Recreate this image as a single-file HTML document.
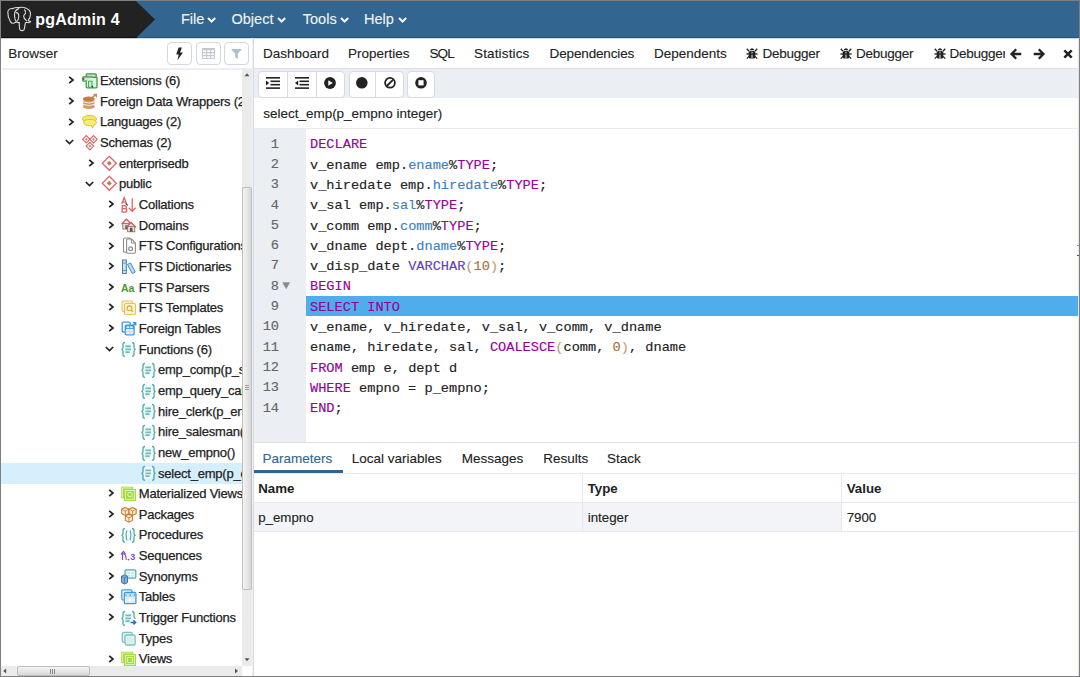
<!DOCTYPE html>
<html><head><meta charset="utf-8"><style>
*{margin:0;padding:0;box-sizing:border-box}
html,body{width:1080px;height:677px;overflow:hidden;background:#fff;font-family:"Liberation Sans",sans-serif;color:#222}
.a{position:absolute}
.tx{white-space:nowrap;font-family:"Liberation Sans",sans-serif;-webkit-text-stroke-width:0.12px}
.mo{white-space:pre;font-family:"Liberation Mono",monospace;-webkit-text-stroke-width:0.15px}
svg{overflow:visible}
.kw{color:#990099}.vr{color:#3c7fc0}.nm{color:#a5733c}.bi{color:#6340c0}.br{color:#bf9f7a}
</style></head><body>
<div class="a" style="left:0px;top:0px;width:1080px;height:677px;background:#7f7f7f;"></div>
<div class="a" style="left:1px;top:1px;width:1078px;height:675px;background:#ffffff;"></div>
<div class="a" style="left:1px;top:1px;width:1078px;height:36px;background:#326690;"></div>
<div class="a" style="left:1px;top:37px;width:1078px;height:1px;background:#24557c;"></div>
<div class="a" style="left:1px;top:1px;width:135px;height:37px;background:#222222;"></div>
<div class="a" style="left:1px;top:37px;width:136px;height:1px;background:#0f0c10;"></div>
<div class="a" style="left:1px;top:38px;width:1078px;height:1px;background:#d3dde8;"></div>
<div class="a" style="left:1px;top:38px;width:137px;height:1px;background:#cfcfcf;"></div>
<svg class="a" style="left:136px;top:1px" width="20" height="37" viewBox="0 0 20 37"><path d="M0 0L19 18.5L0 37Z" fill="#222222"/></svg>
<svg class="a" style="left:0px;top:0px" width="40" height="38" viewBox="0 0 40 38"><g fill="none" stroke="#d6d6d6" stroke-width="1.15" stroke-linecap="round" stroke-linejoin="round">
<path d="M13 8.6C10.2 8.2 8 9.2 7.8 12.2C7.7 15 8.6 18.6 10.4 21.6C11.3 23.1 12.6 23.6 14 23C14.8 22.6 15.3 22.2 15.9 22.3"/>
<path d="M12.6 8.6C14.6 7.6 16.8 7.3 18.6 7.6C20.8 7.1 23.6 7.2 26.2 8.2C28.9 9.3 30.6 11.3 30.5 14.2C30.4 16.8 29.4 18.9 28.2 20.4C29 21.4 30 21.3 30.6 21.6C29.8 22.6 27.6 22.8 26.2 22.3"/>
<path d="M18.8 8.6C16 9.6 14.4 11.6 14.5 15C14.6 18 15.2 20.6 16.4 21.8C17.6 22.8 18.8 22.6 19.2 22.6"/>
<path d="M16.4 12.6C17.7 12.6 18.7 13.8 18.8 16C18.9 18.4 18.6 20 17.2 21"/>
<path d="M19.2 22.6C19.4 25 19.2 27.6 19.8 29.2C20.6 30.9 22.8 31.1 23.9 29.8C24.9 28.4 24.8 25.4 25.2 23.6C25.4 22.8 25.8 22.5 26.3 22.4"/>
<path d="M24.4 9.8C25.6 10.8 26 12.2 25.4 13.4C24.7 14.6 23.6 15 23.7 16.4C23.8 18 24.8 19.6 26.4 20.6"/>
</g></svg>
<div class="a tx" style="left:35.30px;top:11.98px;font-size:16px;line-height:16px;font-weight:bold;color:#ffffff;letter-spacing:0.2px;-webkit-text-stroke-width:0;">pgAdmin 4</div>
<div class="a tx" style="left:181.00px;top:12.41px;font-size:14.5px;line-height:14.5px;font-weight:normal;color:#f2f2f2;letter-spacing:0px;">File</div>
<svg class="a" style="left:207.4px;top:16.6px" width="9" height="6" viewBox="0 0 9 6"><path d="M1 1.1L4.6 4.6L8.2 1.1" fill="none" stroke="#f4f4f4" stroke-width="2.1"/></svg>
<div class="a tx" style="left:231.50px;top:12.41px;font-size:14.5px;line-height:14.5px;font-weight:normal;color:#f2f2f2;letter-spacing:0px;">Object</div>
<svg class="a" style="left:276.9px;top:16.6px" width="9" height="6" viewBox="0 0 9 6"><path d="M1 1.1L4.6 4.6L8.2 1.1" fill="none" stroke="#f4f4f4" stroke-width="2.1"/></svg>
<div class="a tx" style="left:302.80px;top:12.41px;font-size:14.5px;line-height:14.5px;font-weight:normal;color:#f2f2f2;letter-spacing:0px;">Tools</div>
<svg class="a" style="left:340.4px;top:16.6px" width="9" height="6" viewBox="0 0 9 6"><path d="M1 1.1L4.6 4.6L8.2 1.1" fill="none" stroke="#f4f4f4" stroke-width="2.1"/></svg>
<div class="a tx" style="left:364.00px;top:12.41px;font-size:14.5px;line-height:14.5px;font-weight:normal;color:#f2f2f2;letter-spacing:0px;">Help</div>
<svg class="a" style="left:397.9px;top:16.6px" width="9" height="6" viewBox="0 0 9 6"><path d="M1 1.1L4.6 4.6L8.2 1.1" fill="none" stroke="#f4f4f4" stroke-width="2.1"/></svg>
<div class="a tx" style="left:8.20px;top:46.90px;font-size:13.5px;line-height:13.5px;font-weight:normal;color:#222;letter-spacing:0px;">Browser</div>
<div class="a" style="left:167px;top:42px;width:25px;height:23px;border:1px solid #d4d8df;border-radius:4px;background:#fff"></div>
<div class="a" style="left:196px;top:42px;width:25px;height:23px;border:1px solid #d4d8df;border-radius:4px;background:#fff"></div>
<div class="a" style="left:224px;top:42px;width:25px;height:23px;border:1px solid #d4d8df;border-radius:4px;background:#fff"></div>
<svg class="a" style="left:175px;top:47px" width="9" height="14" viewBox="0 0 9 14"><path d="M3.6 0.4H6.9L5 5.5H7.9L2.5 13.3L3.7 7.6H1.2Z" fill="#222"/></svg>
<svg class="a" style="left:202px;top:47.5px" width="13" height="11" viewBox="0 0 13 11"><rect x="0" y="0" width="13" height="11" rx="1" fill="#c3c8d0"/><rect x="1.2" y="2.2" width="2.9" height="1.8" fill="#fff"/><rect x="5.2" y="2.2" width="2.9" height="1.8" fill="#fff"/><rect x="9.2" y="2.2" width="2.9" height="1.8" fill="#fff"/><rect x="1.2" y="5.2" width="2.9" height="1.8" fill="#fff"/><rect x="5.2" y="5.2" width="2.9" height="1.8" fill="#fff"/><rect x="9.2" y="5.2" width="2.9" height="1.8" fill="#fff"/><rect x="1.2" y="8.2" width="2.9" height="1.8" fill="#fff"/><rect x="5.2" y="8.2" width="2.9" height="1.8" fill="#fff"/><rect x="9.2" y="8.2" width="2.9" height="1.8" fill="#fff"/></svg>
<svg class="a" style="left:231px;top:49px" width="11" height="10" viewBox="0 0 11 10"><path d="M0 0H11L6.8 4.8V10L4.2 8.6V4.8Z" fill="#b3bfcb"/></svg>
<div class="a" style="left:2px;top:68px;width:251px;height:2px;background:#eceef3;"></div>
<div class="a" style="left:242px;top:69px;width:10px;height:597px;background:#ebebeb;"></div>
<svg class="a" style="left:242px;top:72px" width="10" height="6" viewBox="0 0 10 6"><path d="M2.5 4.2L5 1.2L7.5 4.2Z" fill="#555"/></svg>
<svg class="a" style="left:242px;top:657px" width="10" height="6" viewBox="0 0 10 6"><path d="M2.5 1.2L5 4.2L7.5 1.2Z" fill="#555"/></svg>
<div class="a" style="left:242px;top:187px;width:10px;height:403px;border:1px solid #bdbdbd;border-radius:2px;background:linear-gradient(90deg,#f4f4f4,#d9d9d9)"></div>
<div class="a" style="left:245px;top:385px;width:4px;height:6px;background:repeating-linear-gradient(180deg,#9a9a9a 0 1px,transparent 1px 2px);"></div>
<div class="a" style="left:252px;top:38px;width:1px;height:638px;background:#f0f1f4;"></div>
<div class="a" style="left:253px;top:38px;width:1px;height:638px;background:#d8dbe2;"></div>
<div class="a" style="left:1px;top:666px;width:241px;height:10px;background:#ebebeb;"></div>
<svg class="a" style="left:1px;top:666px" width="8" height="10" viewBox="0 0 8 10"><path d="M5.2 2.5L2.2 5L5.2 7.5Z" fill="#555"/></svg>
<svg class="a" style="left:232px;top:666px" width="8" height="10" viewBox="0 0 8 10"><path d="M3 2.5L6 5L3 7.5Z" fill="#555"/></svg>
<div class="a" style="left:17px;top:666px;width:73px;height:10px;border:1px solid #bdbdbd;border-radius:2px;background:linear-gradient(180deg,#f4f4f4,#d9d9d9)"></div>
<div class="a" style="left:50px;top:669px;width:6px;height:5px;background:repeating-linear-gradient(90deg,#888 0 1px,transparent 1px 2px);"></div>
<div class="a" style="left:1px;top:69px;width:241px;height:597px;overflow:hidden">
<svg class="a" style="left:67.00px;top:7.30px" width="7" height="8" viewBox="0 0 7 8"><path d="M1.2 0.8L5 4L1.2 7.2" fill="none" stroke="#222" stroke-width="1.7"/></svg>
<svg class="a" style="left:81.00px;top:4.00px;overflow:visible" width="16" height="16" viewBox="0 0 16 16"><path d="M4.2 4.5V1.8Q4.2 0.8 5.2 0.8H13.2Q14.2 0.8 14.2 1.8V4.5" fill="#d6d6d6" stroke="#3f9a3f" stroke-width="1.3"/>
<rect x="0.8" y="3.8" width="9.6" height="4.4" rx="0.8" fill="#dcdcdc" stroke="#3f9a3f" stroke-width="1.3"/>
<path d="M10.4 4.4H14.2Q15 4.4 15 5.2V13.8Q15 14.8 14 14.8H5.2Q4.2 14.8 4.2 13.8V8.2" fill="#d8f6e4" stroke="#3f9a3f" stroke-width="1.3"/>
<rect x="6.6" y="8.2" width="3.4" height="6" fill="#c8f0dc" stroke="#3f9a3f" stroke-width="0.9"/>
<circle cx="1.6" cy="6" r="0.8" fill="#222"/><circle cx="10.4" cy="13.6" r="0.8" fill="#222"/></svg>
<div class="a tx" style="left:99.10px;top:5.15px;font-size:13px;line-height:13px;letter-spacing:-0.22px;color:#222;-webkit-text-stroke-width:0.25px">Extensions (6)</div>
<svg class="a" style="left:67.00px;top:27.95px" width="7" height="8" viewBox="0 0 7 8"><path d="M1.2 0.8L5 4L1.2 7.2" fill="none" stroke="#222" stroke-width="1.7"/></svg>
<svg class="a" style="left:81.00px;top:24.65px;overflow:visible" width="16" height="16" viewBox="0 0 16 16"><g fill="#d09c64"><ellipse cx="6.8" cy="12.6" rx="6" ry="2.3"/><ellipse cx="6.8" cy="10" rx="6" ry="2.3"/><ellipse cx="6.8" cy="7.4" rx="6" ry="2.3"/><ellipse cx="6.8" cy="4.8" rx="6" ry="2.3" fill="#bd8248"/></g>
<g stroke="#fff" stroke-width="0.8" fill="none"><path d="M0.8 7.6Q6.8 10.6 12.8 7.6"/><path d="M0.8 10.2Q6.8 13.2 12.8 10.2"/></g>
<path d="M9.8 3.6L14 0.8M11.4 0.5H14.4V3.4" stroke="#d08a40" stroke-width="1.3" fill="none"/></svg>
<div class="a tx" style="left:99.10px;top:25.80px;font-size:13px;line-height:13px;letter-spacing:-0.22px;color:#222;-webkit-text-stroke-width:0.25px">Foreign Data Wrappers (2)</div>
<svg class="a" style="left:67.00px;top:48.60px" width="7" height="8" viewBox="0 0 7 8"><path d="M1.2 0.8L5 4L1.2 7.2" fill="none" stroke="#222" stroke-width="1.7"/></svg>
<svg class="a" style="left:81.00px;top:45.30px;overflow:visible" width="16" height="16" viewBox="0 0 16 16"><ellipse cx="7.5" cy="5" rx="7" ry="3.6" fill="#f2ea6a" stroke="#d7c43a" stroke-width="1"/>
<ellipse cx="8" cy="8.5" rx="6.5" ry="3.2" fill="#f6ee74" stroke="#d7c43a" stroke-width="1"/>
<path d="M9 11L10.5 14L12 10.5" fill="#f6ee74" stroke="#d7c43a" stroke-width="1"/></svg>
<div class="a tx" style="left:99.10px;top:46.45px;font-size:13px;line-height:13px;letter-spacing:-0.22px;color:#222;-webkit-text-stroke-width:0.25px">Languages (2)</div>
<svg class="a" style="left:64.40px;top:70.45px" width="9" height="6" viewBox="0 0 9 6"><path d="M0.8 1L4.5 4.6L8.2 1" fill="none" stroke="#222" stroke-width="1.7"/></svg>
<svg class="a" style="left:81.00px;top:65.95px;overflow:visible" width="16" height="16" viewBox="0 0 16 16"><g fill="#fff" stroke="#d9666d" stroke-width="1.2"><path d="M4.3 0.6L8 4.3L4.3 8L0.6 4.3Z"/><path d="M11.5 0.6L15.2 4.3L11.5 8L7.8 4.3Z"/><path d="M7.9 7.4L11.6 11.1L7.9 14.8L4.2 11.1Z"/></g>
<g fill="#c87a5a"><rect x="3.3" y="3.3" width="2" height="2" transform="rotate(45 4.3 4.3)"/><rect x="10.5" y="3.3" width="2" height="2" transform="rotate(45 11.5 4.3)"/><rect x="6.9" y="10.1" width="2" height="2" transform="rotate(45 7.9 11.1)"/></g></svg>
<div class="a tx" style="left:99.10px;top:67.10px;font-size:13px;line-height:13px;letter-spacing:-0.22px;color:#222;-webkit-text-stroke-width:0.25px">Schemas (2)</div>
<svg class="a" style="left:87.00px;top:89.90px" width="7" height="8" viewBox="0 0 7 8"><path d="M1.2 0.8L5 4L1.2 7.2" fill="none" stroke="#222" stroke-width="1.7"/></svg>
<svg class="a" style="left:101.00px;top:86.60px;overflow:visible" width="16" height="16" viewBox="0 0 16 16"><path d="M7.3 0.3L14.3 7.3L7.3 14.3L0.3 7.3Z" fill="#fff" stroke="#d9666d" stroke-width="1.3"/>
<rect x="5.5" y="5.5" width="3.6" height="3.6" fill="#c8784e" transform="rotate(45 7.3 7.3)"/></svg>
<div class="a tx" style="left:117.90px;top:87.75px;font-size:13px;line-height:13px;letter-spacing:-0.22px;color:#222;-webkit-text-stroke-width:0.25px">enterprisedb</div>
<svg class="a" style="left:84.40px;top:111.75px" width="9" height="6" viewBox="0 0 9 6"><path d="M0.8 1L4.5 4.6L8.2 1" fill="none" stroke="#222" stroke-width="1.7"/></svg>
<svg class="a" style="left:101.00px;top:107.25px;overflow:visible" width="16" height="16" viewBox="0 0 16 16"><path d="M7.3 0.3L14.3 7.3L7.3 14.3L0.3 7.3Z" fill="#fff" stroke="#d9666d" stroke-width="1.3"/>
<rect x="5.5" y="5.5" width="3.6" height="3.6" fill="#c8784e" transform="rotate(45 7.3 7.3)"/></svg>
<div class="a tx" style="left:117.90px;top:108.40px;font-size:13px;line-height:13px;letter-spacing:-0.22px;color:#222;-webkit-text-stroke-width:0.25px">public</div>
<svg class="a" style="left:106.50px;top:131.20px" width="7" height="8" viewBox="0 0 7 8"><path d="M1.2 0.8L5 4L1.2 7.2" fill="none" stroke="#222" stroke-width="1.7"/></svg>
<svg class="a" style="left:120.00px;top:127.90px;overflow:visible" width="16" height="16" viewBox="0 0 16 16"><g fill="none" stroke="#dd5f66" stroke-width="1.25"><path d="M0.8 7L3.2 0.6L5.6 7M1.6 5H4.8"/><path d="M1.2 8.6H3.6Q5.4 8.6 5.4 10.3Q5.4 11.7 3.6 11.7H1.2ZM1.2 11.7H3.8Q5.8 11.7 5.8 13.4Q5.8 15.1 3.8 15.1H1.2Z"/>
<path d="M11.2 1.2V14.2M7.8 10.8L11.2 14.4L14.6 10.8"/></g><path d="M4.6 6.6L7 8.4" stroke="#333" stroke-width="1.1"/></svg>
<div class="a tx" style="left:137.80px;top:129.05px;font-size:13px;line-height:13px;letter-spacing:-0.22px;color:#222;-webkit-text-stroke-width:0.25px">Collations</div>
<svg class="a" style="left:106.50px;top:151.85px" width="7" height="8" viewBox="0 0 7 8"><path d="M1.2 0.8L5 4L1.2 7.2" fill="none" stroke="#222" stroke-width="1.7"/></svg>
<svg class="a" style="left:120.00px;top:148.55px;overflow:visible" width="16" height="16" viewBox="0 0 16 16"><path d="M0.6 6.3L5.5 1.3L10.4 6.3" fill="none" stroke="#e0575c" stroke-width="1.4"/><rect x="1.8" y="5.6" width="7.4" height="5.4" fill="#cfe6f6" stroke="#8a6a50" stroke-width="0.8"/><rect x="4.3" y="7.2" width="2.6" height="3.8" fill="#8a4a20"/>
<path d="M5.3 9.3L10 4.5L14.9 9.3" fill="#cfe6f6" stroke="#e0575c" stroke-width="1.4"/><rect x="6.6" y="8.4" width="7.2" height="5.4" fill="#cfe6f6" stroke="#8a6a50" stroke-width="0.8"/><rect x="8.9" y="9.8" width="2.6" height="4" fill="#8a4a20"/></svg>
<div class="a tx" style="left:137.80px;top:149.70px;font-size:13px;line-height:13px;letter-spacing:-0.22px;color:#222;-webkit-text-stroke-width:0.25px">Domains</div>
<svg class="a" style="left:106.50px;top:172.50px" width="7" height="8" viewBox="0 0 7 8"><path d="M1.2 0.8L5 4L1.2 7.2" fill="none" stroke="#222" stroke-width="1.7"/></svg>
<svg class="a" style="left:120.00px;top:169.20px;overflow:visible" width="16" height="16" viewBox="0 0 16 16"><path d="M2.5 1.5Q2.5 0 4 0H8.5L10.5 2V13Q10.5 14.2 9.3 14.2H3.7Q2.5 14.2 2.5 13Z" fill="#fff" stroke="#8a8a8a" stroke-width="1.1"/>
<path d="M5.6 2.2Q5.6 1 6.8 1H10.5L14.4 4.9V14.1Q14.4 15.3 13.2 15.3H6.8Q5.6 15.3 5.6 14.1Z" fill="#fff" stroke="#8a8a8a" stroke-width="1.1"/><path d="M10.4 1.2V5H14.2" fill="none" stroke="#8a8a8a" stroke-width="1"/>
<circle cx="9.6" cy="10.8" r="1.9" fill="none" stroke="#8a8a8a" stroke-width="1.2"/></svg>
<div class="a tx" style="left:137.80px;top:170.35px;font-size:13px;line-height:13px;letter-spacing:-0.22px;color:#222;-webkit-text-stroke-width:0.25px">FTS Configurations</div>
<svg class="a" style="left:106.50px;top:193.15px" width="7" height="8" viewBox="0 0 7 8"><path d="M1.2 0.8L5 4L1.2 7.2" fill="none" stroke="#222" stroke-width="1.7"/></svg>
<svg class="a" style="left:120.00px;top:189.85px;overflow:visible" width="16" height="16" viewBox="0 0 16 16"><rect x="1.5" y="1" width="3.8" height="13.5" fill="#cfe4f2" stroke="#4a7eaa" stroke-width="1"/>
<path d="M6.5 5.5L9.5 4L14.3 13L11.3 14.6Z" fill="#b9dcf3" stroke="#3d8fd0" stroke-width="1"/>
<path d="M1.8 4H5M1.8 11.5H5" stroke="#4a7eaa" stroke-width="0.8"/></svg>
<div class="a tx" style="left:137.80px;top:191.00px;font-size:13px;line-height:13px;letter-spacing:-0.22px;color:#222;-webkit-text-stroke-width:0.25px">FTS Dictionaries</div>
<svg class="a" style="left:106.50px;top:213.80px" width="7" height="8" viewBox="0 0 7 8"><path d="M1.2 0.8L5 4L1.2 7.2" fill="none" stroke="#222" stroke-width="1.7"/></svg>
<svg class="a" style="left:120.00px;top:210.50px;overflow:visible" width="16" height="16" viewBox="0 0 16 16"><text x="0" y="12" font-family="Liberation Sans" font-weight="bold" font-size="10.5" fill="#4c9a2a">Aa</text></svg>
<div class="a tx" style="left:137.80px;top:211.65px;font-size:13px;line-height:13px;letter-spacing:-0.22px;color:#222;-webkit-text-stroke-width:0.25px">FTS Parsers</div>
<svg class="a" style="left:106.50px;top:234.45px" width="7" height="8" viewBox="0 0 7 8"><path d="M1.2 0.8L5 4L1.2 7.2" fill="none" stroke="#222" stroke-width="1.7"/></svg>
<svg class="a" style="left:120.00px;top:231.15px;overflow:visible" width="16" height="16" viewBox="0 0 16 16"><rect x="1" y="1" width="10.5" height="10.5" rx="1.5" fill="#fdf4d0" stroke="#e8c060" stroke-width="1.1"/>
<rect x="3.5" y="3.5" width="11" height="11" rx="1.5" fill="#fdf4d0" stroke="#e8c060" stroke-width="1.1"/>
<circle cx="8.5" cy="8.3" r="2.4" fill="none" stroke="#d9a830" stroke-width="1.1"/><path d="M10.2 10L12 11.8" stroke="#d9a830" stroke-width="1.1"/></svg>
<div class="a tx" style="left:137.80px;top:232.30px;font-size:13px;line-height:13px;letter-spacing:-0.22px;color:#222;-webkit-text-stroke-width:0.25px">FTS Templates</div>
<svg class="a" style="left:106.50px;top:255.10px" width="7" height="8" viewBox="0 0 7 8"><path d="M1.2 0.8L5 4L1.2 7.2" fill="none" stroke="#222" stroke-width="1.7"/></svg>
<svg class="a" style="left:120.00px;top:251.80px;overflow:visible" width="16" height="16" viewBox="0 0 16 16"><rect x="1.2" y="1.2" width="8" height="9.8" rx="1.2" fill="#fff" stroke="#3a96e6" stroke-width="1.3"/>
<rect x="4.3" y="4.1" width="8.8" height="9.7" rx="1.2" fill="#eef0f2" stroke="#3a96e6" stroke-width="1.3"/>
<rect x="4.5" y="4.3" width="8.4" height="3.6" fill="#3a96e6"/><rect x="5.6" y="5.3" width="2.6" height="1.6" fill="#fff"/><rect x="9.2" y="5.3" width="2.6" height="1.6" fill="#fff"/>
<path d="M4.3 10.8H13.1M8.7 7.9V13.8" stroke="#bcd6ee" stroke-width="0.9"/>
<path d="M10.8 5.4L14.4 2M11.8 1.6H14.8V4.4" stroke="#3a96e6" stroke-width="1.2" fill="none"/></svg>
<div class="a tx" style="left:137.80px;top:252.95px;font-size:13px;line-height:13px;letter-spacing:-0.22px;color:#222;-webkit-text-stroke-width:0.25px">Foreign Tables</div>
<svg class="a" style="left:103.90px;top:276.95px" width="9" height="6" viewBox="0 0 9 6"><path d="M0.8 1L4.5 4.6L8.2 1" fill="none" stroke="#222" stroke-width="1.7"/></svg>
<svg class="a" style="left:120.00px;top:272.45px;overflow:visible" width="16" height="16" viewBox="0 0 16 16"><rect x="3" y="2" width="9" height="12" rx="3" fill="#eefafa"/><g fill="none" stroke="#52a6ac" stroke-width="1.3" transform="translate(0 0.5)"><path d="M4 1Q2 1 2 3V6Q2 7.9 0.3 7.9Q2 7.9 2 9.8V12.8Q2 14.8 4 14.8"/><path d="M11 1Q13 1 13 3V6Q13 7.9 14.7 7.9Q13 7.9 13 9.8V12.8Q13 14.8 11 14.8"/></g><path d="M4.4 4.8H10M4.4 7.8H10M4.4 10.7H8.6" stroke="#6dbdb8" stroke-width="1.7" transform="translate(0 0.5)"/></svg>
<div class="a tx" style="left:137.80px;top:273.60px;font-size:13px;line-height:13px;letter-spacing:-0.22px;color:#222;-webkit-text-stroke-width:0.25px">Functions (6)</div>
<svg class="a" style="left:140.00px;top:293.10px;overflow:visible" width="16" height="16" viewBox="0 0 16 16"><rect x="3" y="2" width="9" height="12" rx="3" fill="#eefafa"/><g fill="none" stroke="#52a6ac" stroke-width="1.3" transform="translate(0 0.5)"><path d="M4 1Q2 1 2 3V6Q2 7.9 0.3 7.9Q2 7.9 2 9.8V12.8Q2 14.8 4 14.8"/><path d="M11 1Q13 1 13 3V6Q13 7.9 14.7 7.9Q13 7.9 13 9.8V12.8Q13 14.8 11 14.8"/></g><path d="M4.4 4.8H10M4.4 7.8H10M4.4 10.7H8.6" stroke="#6dbdb8" stroke-width="1.7" transform="translate(0 0.5)"/></svg>
<div class="a tx" style="left:157.00px;top:294.25px;font-size:13px;line-height:13px;letter-spacing:-0.22px;color:#222;-webkit-text-stroke-width:0.25px">emp_comp(p_sal numeric, p_comm numeric)</div>
<svg class="a" style="left:140.00px;top:313.75px;overflow:visible" width="16" height="16" viewBox="0 0 16 16"><rect x="3" y="2" width="9" height="12" rx="3" fill="#eefafa"/><g fill="none" stroke="#52a6ac" stroke-width="1.3" transform="translate(0 0.5)"><path d="M4 1Q2 1 2 3V6Q2 7.9 0.3 7.9Q2 7.9 2 9.8V12.8Q2 14.8 4 14.8"/><path d="M11 1Q13 1 13 3V6Q13 7.9 14.7 7.9Q13 7.9 13 9.8V12.8Q13 14.8 11 14.8"/></g><path d="M4.4 4.8H10M4.4 7.8H10M4.4 10.7H8.6" stroke="#6dbdb8" stroke-width="1.7" transform="translate(0 0.5)"/></svg>
<div class="a tx" style="left:157.00px;top:314.90px;font-size:13px;line-height:13px;letter-spacing:-0.22px;color:#222;-webkit-text-stroke-width:0.25px">emp_query_caller()</div>
<svg class="a" style="left:140.00px;top:334.40px;overflow:visible" width="16" height="16" viewBox="0 0 16 16"><rect x="3" y="2" width="9" height="12" rx="3" fill="#eefafa"/><g fill="none" stroke="#52a6ac" stroke-width="1.3" transform="translate(0 0.5)"><path d="M4 1Q2 1 2 3V6Q2 7.9 0.3 7.9Q2 7.9 2 9.8V12.8Q2 14.8 4 14.8"/><path d="M11 1Q13 1 13 3V6Q13 7.9 14.7 7.9Q13 7.9 13 9.8V12.8Q13 14.8 11 14.8"/></g><path d="M4.4 4.8H10M4.4 7.8H10M4.4 10.7H8.6" stroke="#6dbdb8" stroke-width="1.7" transform="translate(0 0.5)"/></svg>
<div class="a tx" style="left:157.00px;top:335.55px;font-size:13px;line-height:13px;letter-spacing:-0.22px;color:#222;-webkit-text-stroke-width:0.25px">hire_clerk(p_ename character varying)</div>
<svg class="a" style="left:140.00px;top:355.05px;overflow:visible" width="16" height="16" viewBox="0 0 16 16"><rect x="3" y="2" width="9" height="12" rx="3" fill="#eefafa"/><g fill="none" stroke="#52a6ac" stroke-width="1.3" transform="translate(0 0.5)"><path d="M4 1Q2 1 2 3V6Q2 7.9 0.3 7.9Q2 7.9 2 9.8V12.8Q2 14.8 4 14.8"/><path d="M11 1Q13 1 13 3V6Q13 7.9 14.7 7.9Q13 7.9 13 9.8V12.8Q13 14.8 11 14.8"/></g><path d="M4.4 4.8H10M4.4 7.8H10M4.4 10.7H8.6" stroke="#6dbdb8" stroke-width="1.7" transform="translate(0 0.5)"/></svg>
<div class="a tx" style="left:157.00px;top:356.20px;font-size:13px;line-height:13px;letter-spacing:-0.22px;color:#222;-webkit-text-stroke-width:0.25px">hire_salesman(p_ename character varying)</div>
<svg class="a" style="left:140.00px;top:375.70px;overflow:visible" width="16" height="16" viewBox="0 0 16 16"><rect x="3" y="2" width="9" height="12" rx="3" fill="#eefafa"/><g fill="none" stroke="#52a6ac" stroke-width="1.3" transform="translate(0 0.5)"><path d="M4 1Q2 1 2 3V6Q2 7.9 0.3 7.9Q2 7.9 2 9.8V12.8Q2 14.8 4 14.8"/><path d="M11 1Q13 1 13 3V6Q13 7.9 14.7 7.9Q13 7.9 13 9.8V12.8Q13 14.8 11 14.8"/></g><path d="M4.4 4.8H10M4.4 7.8H10M4.4 10.7H8.6" stroke="#6dbdb8" stroke-width="1.7" transform="translate(0 0.5)"/></svg>
<div class="a tx" style="left:157.00px;top:376.85px;font-size:13px;line-height:13px;letter-spacing:-0.22px;color:#222;-webkit-text-stroke-width:0.25px">new_empno()</div>
<div class="a" style="left:0px;top:393.65px;width:241px;height:21px;background:#d6effc"></div>
<svg class="a" style="left:140.00px;top:396.35px;overflow:visible" width="16" height="16" viewBox="0 0 16 16"><rect x="3" y="2" width="9" height="12" rx="3" fill="#eefafa"/><g fill="none" stroke="#52a6ac" stroke-width="1.3" transform="translate(0 0.5)"><path d="M4 1Q2 1 2 3V6Q2 7.9 0.3 7.9Q2 7.9 2 9.8V12.8Q2 14.8 4 14.8"/><path d="M11 1Q13 1 13 3V6Q13 7.9 14.7 7.9Q13 7.9 13 9.8V12.8Q13 14.8 11 14.8"/></g><path d="M4.4 4.8H10M4.4 7.8H10M4.4 10.7H8.6" stroke="#6dbdb8" stroke-width="1.7" transform="translate(0 0.5)"/></svg>
<div class="a tx" style="left:157.00px;top:397.50px;font-size:13px;line-height:13px;letter-spacing:-0.22px;color:#222;-webkit-text-stroke-width:0.25px">select_emp(p_empno integer)</div>
<svg class="a" style="left:106.50px;top:420.30px" width="7" height="8" viewBox="0 0 7 8"><path d="M1.2 0.8L5 4L1.2 7.2" fill="none" stroke="#222" stroke-width="1.7"/></svg>
<svg class="a" style="left:120.00px;top:417.00px;overflow:visible" width="16" height="16" viewBox="0 0 16 16"><rect x="0.2" y="0.7" width="12" height="11.5" fill="#a5dc45"/><rect x="3" y="3" width="12" height="12" fill="#a5dc45"/>
<path d="M1.5 11V2H11" fill="none" stroke="#e8f8c8" stroke-width="0.8"/><rect x="4.5" y="4.5" width="9" height="9" fill="none" stroke="#e8f8c8" stroke-width="0.8"/>
<circle cx="9" cy="8.6" r="2.3" fill="none" stroke="#e8f8c8" stroke-width="0.9"/><path d="M10.6 10.4L12.6 12.4" stroke="#e8f8c8" stroke-width="0.9"/></svg>
<div class="a tx" style="left:137.80px;top:418.15px;font-size:13px;line-height:13px;letter-spacing:-0.22px;color:#222;-webkit-text-stroke-width:0.25px">Materialized Views</div>
<svg class="a" style="left:106.50px;top:440.95px" width="7" height="8" viewBox="0 0 7 8"><path d="M1.2 0.8L5 4L1.2 7.2" fill="none" stroke="#222" stroke-width="1.7"/></svg>
<svg class="a" style="left:120.00px;top:437.65px;overflow:visible" width="16" height="16" viewBox="0 0 16 16"><path d="M4.2 0.40000000000000036L7.800000000000001 2.2V6.6000000000000005L4.2 8.4L0.6000000000000001 6.6000000000000005V2.2Z" fill="#fdebd0" stroke="#c4843e" stroke-width="1.1"/><path d="M0.6000000000000001 2.2L4.2 4.0L7.800000000000001 2.2M4.2 4.0V8.4" stroke="#c4843e" stroke-width="0.9" fill="none"/><path d="M11.6 0.40000000000000036L15.2 2.2V6.6000000000000005L11.6 8.4L8.0 6.6000000000000005V2.2Z" fill="#fdebd0" stroke="#c4843e" stroke-width="1.1"/><path d="M8.0 2.2L11.6 4.0L15.2 2.2M11.6 4.0V8.4" stroke="#c4843e" stroke-width="0.9" fill="none"/><path d="M7.9 7.199999999999999L11.5 9.0V13.399999999999999L7.9 15.2L4.300000000000001 13.399999999999999V9.0Z" fill="#fdebd0" stroke="#c4843e" stroke-width="1.1"/><path d="M4.300000000000001 9.0L7.9 10.799999999999999L11.5 9.0M7.9 10.799999999999999V15.2" stroke="#c4843e" stroke-width="0.9" fill="none"/></svg>
<div class="a tx" style="left:137.80px;top:438.80px;font-size:13px;line-height:13px;letter-spacing:-0.22px;color:#222;-webkit-text-stroke-width:0.25px">Packages</div>
<svg class="a" style="left:106.50px;top:461.60px" width="7" height="8" viewBox="0 0 7 8"><path d="M1.2 0.8L5 4L1.2 7.2" fill="none" stroke="#222" stroke-width="1.7"/></svg>
<svg class="a" style="left:120.00px;top:458.30px;overflow:visible" width="16" height="16" viewBox="0 0 16 16"><rect x="3" y="2" width="9" height="12" rx="3" fill="#eefafa"/><g fill="none" stroke="#52a6ac" stroke-width="1.3" transform="translate(0 0.5)"><path d="M4 1Q2 1 2 3V6Q2 7.9 0.3 7.9Q2 7.9 2 9.8V12.8Q2 14.8 4 14.8"/><path d="M11 1Q13 1 13 3V6Q13 7.9 14.7 7.9Q13 7.9 13 9.8V12.8Q13 14.8 11 14.8"/><path d="M5.8 3Q4.2 7.9 5.8 12.8M9.2 3Q10.8 7.9 9.2 12.8" stroke-width="1.1"/></g></svg>
<div class="a tx" style="left:137.80px;top:459.45px;font-size:13px;line-height:13px;letter-spacing:-0.22px;color:#222;-webkit-text-stroke-width:0.25px">Procedures</div>
<svg class="a" style="left:106.50px;top:482.25px" width="7" height="8" viewBox="0 0 7 8"><path d="M1.2 0.8L5 4L1.2 7.2" fill="none" stroke="#222" stroke-width="1.7"/></svg>
<svg class="a" style="left:120.00px;top:478.95px;overflow:visible" width="16" height="16" viewBox="0 0 16 16"><path d="M1.5 12V4.5M0 6.5L2.5 3.5L4.5 6.2" stroke="#8a4bc8" stroke-width="1.2" fill="none"/><path d="M2 6Q5 5 5.2 12" stroke="#8a4bc8" stroke-width="1.1" fill="none"/>
<circle cx="7.5" cy="11.6" r="0.9" fill="#8a4bc8"/><text x="9.2" y="12" font-family="Liberation Sans" font-weight="bold" font-size="9" fill="#8a4bc8">3</text></svg>
<div class="a tx" style="left:137.80px;top:480.10px;font-size:13px;line-height:13px;letter-spacing:-0.22px;color:#222;-webkit-text-stroke-width:0.25px">Sequences</div>
<svg class="a" style="left:106.50px;top:502.90px" width="7" height="8" viewBox="0 0 7 8"><path d="M1.2 0.8L5 4L1.2 7.2" fill="none" stroke="#222" stroke-width="1.7"/></svg>
<svg class="a" style="left:120.00px;top:499.60px;overflow:visible" width="16" height="16" viewBox="0 0 16 16"><rect x="4" y="0.8" width="10.8" height="8.4" rx="1.2" fill="#e6f4f4" stroke="#5aa8a8" stroke-width="1.2"/><rect x="6" y="3.6" width="7" height="4" fill="#c4e4f0"/><path d="M6 5.6H13M9.5 3.6V7.6" stroke="#fff" stroke-width="0.8"/>
<path d="M3.5 5.8L6.5 7.3V13.6L3.5 15.1L0.5 13.6V7.3Z" fill="#7fb0d8" stroke="#3f78b0" stroke-width="1"/><path d="M0.5 7.3L3.5 8.8L6.5 7.3M3.5 8.8V15" stroke="#3f78b0" stroke-width="0.8" fill="none"/></svg>
<div class="a tx" style="left:137.80px;top:500.75px;font-size:13px;line-height:13px;letter-spacing:-0.22px;color:#222;-webkit-text-stroke-width:0.25px">Synonyms</div>
<svg class="a" style="left:106.50px;top:523.55px" width="7" height="8" viewBox="0 0 7 8"><path d="M1.2 0.8L5 4L1.2 7.2" fill="none" stroke="#222" stroke-width="1.7"/></svg>
<svg class="a" style="left:120.00px;top:520.25px;overflow:visible" width="16" height="16" viewBox="0 0 16 16"><rect x="0.8" y="0.8" width="10.2" height="10.2" rx="1.2" fill="#f4f8fc" stroke="#3a9ae6" stroke-width="1.2"/>
<rect x="3.3" y="3.3" width="11.6" height="11.4" rx="1.2" fill="#fff" stroke="#3a9ae6" stroke-width="1.3"/>
<rect x="4.4" y="4.6" width="9.4" height="2.8" fill="#3a9ae6"/><rect x="5.2" y="5.3" width="3.6" height="1.4" fill="#fff"/><rect x="9.6" y="5.3" width="3.4" height="1.4" fill="#fff"/>
<rect x="4.4" y="8.4" width="9.4" height="5.4" fill="#e2e4e8"/><path d="M4.4 11.1H13.8M9.1 8.4V13.8" stroke="#fff" stroke-width="0.9"/></svg>
<div class="a tx" style="left:137.80px;top:521.40px;font-size:13px;line-height:13px;letter-spacing:-0.22px;color:#222;-webkit-text-stroke-width:0.25px">Tables</div>
<svg class="a" style="left:106.50px;top:544.20px" width="7" height="8" viewBox="0 0 7 8"><path d="M1.2 0.8L5 4L1.2 7.2" fill="none" stroke="#222" stroke-width="1.7"/></svg>
<svg class="a" style="left:120.00px;top:540.90px;overflow:visible" width="16" height="16" viewBox="0 0 16 16"><rect x="3" y="2" width="9" height="12" rx="3" fill="#eefafa"/><g fill="none" stroke="#52a6ac" stroke-width="1.3" transform="translate(0 0.5)"><path d="M4 1Q2 1 2 3V6Q2 7.9 0.3 7.9Q2 7.9 2 9.8V12.8Q2 14.8 4 14.8"/><path d="M11 1Q13 1 13 3V6Q13 7.9 14.7 7.9"/></g><path d="M4.4 4.8H10M4.4 7.8H10M4.4 10.7H8.6" stroke="#6dbdb8" stroke-width="1.7" transform="translate(0 0.5)"/><path d="M9.6 12.4H14.2M12.4 10.4L14.6 12.4L12.4 14.4" stroke="#2d6fb8" stroke-width="1.5" fill="none"/></svg>
<div class="a tx" style="left:137.80px;top:542.05px;font-size:13px;line-height:13px;letter-spacing:-0.22px;color:#222;-webkit-text-stroke-width:0.25px">Trigger Functions</div>
<svg class="a" style="left:120.00px;top:561.55px;overflow:visible" width="16" height="16" viewBox="0 0 16 16"><rect x="1.3" y="1.3" width="10" height="10" rx="1.6" fill="#d8f0ee" stroke="#80c4c2" stroke-width="1.3"/>
<rect x="4" y="4" width="10.2" height="10" rx="1.6" fill="#d4efec" stroke="#80c4c2" stroke-width="1.3"/><rect x="5.6" y="5.6" width="7" height="6.8" fill="none" stroke="#fff" stroke-width="0.7" stroke-dasharray="1 1"/></svg>
<div class="a tx" style="left:137.80px;top:562.70px;font-size:13px;line-height:13px;letter-spacing:-0.22px;color:#222;-webkit-text-stroke-width:0.25px">Types</div>
<svg class="a" style="left:106.50px;top:585.50px" width="7" height="8" viewBox="0 0 7 8"><path d="M1.2 0.8L5 4L1.2 7.2" fill="none" stroke="#222" stroke-width="1.7"/></svg>
<svg class="a" style="left:120.00px;top:582.20px;overflow:visible" width="16" height="16" viewBox="0 0 16 16"><rect x="0.2" y="0.7" width="12" height="11.5" fill="#a5dc45"/><rect x="3" y="3" width="12" height="12" fill="#a5dc45"/>
<path d="M1.5 11V2H11" fill="none" stroke="#e8f8c8" stroke-width="0.8"/><rect x="4.5" y="4.5" width="9" height="9" fill="none" stroke="#e8f8c8" stroke-width="0.8"/>
<rect x="6.6" y="6.6" width="4.8" height="4.8" fill="none" stroke="#e8f8c8" stroke-width="0.8"/></svg>
<div class="a tx" style="left:137.80px;top:583.35px;font-size:13px;line-height:13px;letter-spacing:-0.22px;color:#222;-webkit-text-stroke-width:0.25px">Views</div>
</div>
<div class="a" style="left:254px;top:68px;width:824px;height:1px;background:#dde0e6;"></div>
<div class="a" style="left:1078px;top:38px;width:1px;height:638px;background:#e4e6eb;"></div>
<div class="a" style="left:1077px;top:245px;width:2px;height:1px;background:#a89888;"></div>
<div class="a" style="left:1077px;top:255px;width:2px;height:1px;background:#555555;"></div>
<div class="a tx" style="left:263.00px;top:47.10px;font-size:13.5px;line-height:13.5px;font-weight:normal;color:#222;letter-spacing:0px;">Dashboard</div>
<div class="a tx" style="left:348.00px;top:47.10px;font-size:13.5px;line-height:13.5px;font-weight:normal;color:#222;letter-spacing:0px;">Properties</div>
<div class="a tx" style="left:429.50px;top:47.10px;font-size:13.5px;line-height:13.5px;font-weight:normal;color:#222;letter-spacing:-0.9px;">SQL</div>
<div class="a tx" style="left:474.00px;top:47.10px;font-size:13.5px;line-height:13.5px;font-weight:normal;color:#222;letter-spacing:0.15px;">Statistics</div>
<div class="a tx" style="left:549.60px;top:47.10px;font-size:13.5px;line-height:13.5px;font-weight:normal;color:#222;letter-spacing:-0.15px;">Dependencies</div>
<div class="a tx" style="left:654.00px;top:47.10px;font-size:13.5px;line-height:13.5px;font-weight:normal;color:#222;letter-spacing:0px;">Dependents</div>
<div class="a tx" style="left:762.50px;top:47.10px;font-size:13.5px;line-height:13.5px;font-weight:normal;color:#222;letter-spacing:-0.25px;">Debugger</div>
<div class="a tx" style="left:856.00px;top:47.10px;font-size:13.5px;line-height:13.5px;font-weight:normal;color:#222;letter-spacing:-0.25px;">Debugger</div>
<div class="a" style="left:949.5px;top:45px;width:55px;height:18px;overflow:hidden">
<div class="a tx" style="left:0.00px;top:2.10px;font-size:13.5px;line-height:13.5px;font-weight:normal;color:#222;letter-spacing:-0.25px;">Debugger</div>
</div>
<svg class="a" style="left:746px;top:47px" width="12" height="12" viewBox="0 0 12 12"><g fill="#222"><path d="M3.4 3.2Q6 -0.6 8.6 3.2Z"/><rect x="2.7" y="4" width="6.6" height="7.6" rx="1.6"/></g>
<rect x="5.55" y="4.6" width="0.9" height="6.6" fill="#fff"/>
<g stroke="#222" stroke-width="1.3" fill="none"><path d="M0.4 7H11.6"/><path d="M0.8 1.8L3 4.3M11.2 1.8L9 4.3M0.8 11.6L3 9.4M11.2 11.6L9 9.4"/></g></svg>
<svg class="a" style="left:839.5px;top:47px" width="12" height="12" viewBox="0 0 12 12"><g fill="#222"><path d="M3.4 3.2Q6 -0.6 8.6 3.2Z"/><rect x="2.7" y="4" width="6.6" height="7.6" rx="1.6"/></g>
<rect x="5.55" y="4.6" width="0.9" height="6.6" fill="#fff"/>
<g stroke="#222" stroke-width="1.3" fill="none"><path d="M0.4 7H11.6"/><path d="M0.8 1.8L3 4.3M11.2 1.8L9 4.3M0.8 11.6L3 9.4M11.2 11.6L9 9.4"/></g></svg>
<svg class="a" style="left:934px;top:47px" width="12" height="12" viewBox="0 0 12 12"><g fill="#222"><path d="M3.4 3.2Q6 -0.6 8.6 3.2Z"/><rect x="2.7" y="4" width="6.6" height="7.6" rx="1.6"/></g>
<rect x="5.55" y="4.6" width="0.9" height="6.6" fill="#fff"/>
<g stroke="#222" stroke-width="1.3" fill="none"><path d="M0.4 7H11.6"/><path d="M0.8 1.8L3 4.3M11.2 1.8L9 4.3M0.8 11.6L3 9.4M11.2 11.6L9 9.4"/></g></svg>
<svg class="a" style="left:1010px;top:48px" width="12" height="12" viewBox="0 0 12 12"><path d="M6.2 1.2L1.5 6L6.2 10.8M1.8 6H11.3" fill="none" stroke="#222" stroke-width="2.3" stroke-linejoin="miter"/></svg>
<svg class="a" style="left:1032.5px;top:48px" width="12" height="12" viewBox="0 0 12 12"><path d="M5.8 1.2L10.5 6L5.8 10.8M0.7 6H10.2" fill="none" stroke="#222" stroke-width="2.3"/></svg>
<svg class="a" style="left:1063px;top:48.8px" width="10" height="10" viewBox="0 0 10 10"><path d="M1.3 1.3L8.7 8.7M8.7 1.3L1.3 8.7" stroke="#222" stroke-width="2.4"/></svg>
<div class="a" style="left:254px;top:69px;width:824px;height:29px;background:#ebeef3;"></div>
<div class="a" style="left:258px;top:70.5px;width:86.5px;height:27px;border:1px solid #d6dae1;border-radius:4px;background:#fff"></div>
<div class="a" style="left:287.2px;top:71px;width:1px;height:26px;background:#d6dae1;"></div>
<div class="a" style="left:316.2px;top:71px;width:1px;height:26px;background:#d6dae1;"></div>
<div class="a" style="left:348.5px;top:70.5px;width:55px;height:27px;border:1px solid #d6dae1;border-radius:4px;background:#fff"></div>
<div class="a" style="left:375.3px;top:71px;width:1px;height:26px;background:#d6dae1;"></div>
<div class="a" style="left:407px;top:70.5px;width:28px;height:27px;border:1px solid #d6dae1;border-radius:4px;background:#fff"></div>
<svg class="a" style="left:265.8px;top:77.2px" width="14" height="12" viewBox="0 0 14 12"><g fill="#222"><rect x="0" y="0" width="14" height="1.6"/><rect x="4.5" y="3.5" width="9.5" height="1.6"/><rect x="4.5" y="6.9" width="9.5" height="1.6"/><rect x="0" y="10.3" width="14" height="1.6"/></g><path d="M0 3.4L3.2 6L0 8.6Z" fill="#222"/></svg>
<svg class="a" style="left:295px;top:77.2px" width="14" height="12" viewBox="0 0 14 12"><g fill="#222"><rect x="0" y="0" width="14" height="1.6"/><rect x="4.5" y="3.5" width="9.5" height="1.6"/><rect x="4.5" y="6.9" width="9.5" height="1.6"/><rect x="0" y="10.3" width="14" height="1.6"/></g><path d="M3.2 3.4L0 6L3.2 8.6Z" fill="#222"/></svg>
<svg class="a" style="left:324px;top:77px" width="12" height="12" viewBox="0 0 12 12"><circle cx="6" cy="6" r="5.9" fill="#222"/><path d="M4.3 3.2L8.8 6L4.3 8.8Z" fill="#fff"/></svg>
<svg class="a" style="left:356.3px;top:77.2px" width="12" height="12" viewBox="0 0 12 12"><circle cx="5.8" cy="5.8" r="5.8" fill="#222"/></svg>
<svg class="a" style="left:383.5px;top:77.2px" width="12" height="12" viewBox="0 0 12 12"><circle cx="6" cy="5.8" r="4.9" fill="none" stroke="#222" stroke-width="1.8"/><path d="M2.8 9L9.2 2.6" stroke="#222" stroke-width="1.8"/></svg>
<svg class="a" style="left:415.3px;top:77.2px" width="12" height="12" viewBox="0 0 12 12"><circle cx="6" cy="5.8" r="5.8" fill="#222"/><rect x="3.4" y="3.2" width="5.2" height="5.2" fill="#fff"/></svg>
<div class="a tx" style="left:263.30px;top:107.20px;font-size:13.5px;line-height:13.5px;font-weight:normal;color:#222;letter-spacing:-0.02px;">select_emp(p_empno integer)</div>
<div class="a" style="left:254px;top:128px;width:824px;height:1px;background:#e8eaee;"></div>
<div class="a" style="left:254px;top:129px;width:52px;height:313px;background:#ebeef3;"></div>
<div class="a" style="left:306px;top:296px;width:772px;height:20.4px;background:#50adeb;"></div>
<div class="a mo" style="left:310.00px;top:138.35px;font-size:13.63px;line-height:13.63px;color:#222;"><span class="kw">DECLARE</span></div>
<div class="a mo" style="left:270.82px;top:137.75px;font-size:13.63px;line-height:13.63px;color:#666666;">1</div>
<div class="a mo" style="left:310.00px;top:158.64px;font-size:13.63px;line-height:13.63px;color:#222;">v_ename emp.<span class="vr">ename</span>%<span class="kw">TYPE</span>;</div>
<div class="a mo" style="left:270.82px;top:158.04px;font-size:13.63px;line-height:13.63px;color:#666666;">2</div>
<div class="a mo" style="left:310.00px;top:178.93px;font-size:13.63px;line-height:13.63px;color:#222;">v_hiredate emp.<span class="vr">hiredate</span>%<span class="kw">TYPE</span>;</div>
<div class="a mo" style="left:270.82px;top:178.33px;font-size:13.63px;line-height:13.63px;color:#666666;">3</div>
<div class="a mo" style="left:310.00px;top:199.22px;font-size:13.63px;line-height:13.63px;color:#222;">v_sal emp.<span class="vr">sal</span>%<span class="kw">TYPE</span>;</div>
<div class="a mo" style="left:270.82px;top:198.62px;font-size:13.63px;line-height:13.63px;color:#666666;">4</div>
<div class="a mo" style="left:310.00px;top:219.51px;font-size:13.63px;line-height:13.63px;color:#222;">v_comm emp.<span class="vr">comm</span>%<span class="kw">TYPE</span>;</div>
<div class="a mo" style="left:270.82px;top:218.91px;font-size:13.63px;line-height:13.63px;color:#666666;">5</div>
<div class="a mo" style="left:310.00px;top:239.80px;font-size:13.63px;line-height:13.63px;color:#222;">v_dname dept.<span class="vr">dname</span>%<span class="kw">TYPE</span>;</div>
<div class="a mo" style="left:270.82px;top:239.20px;font-size:13.63px;line-height:13.63px;color:#666666;">6</div>
<div class="a mo" style="left:310.00px;top:260.09px;font-size:13.63px;line-height:13.63px;color:#222;">v_disp_date <span class="bi">VARCHAR</span><span class="br">(</span><span class="nm">10</span><span class="br">)</span>;</div>
<div class="a mo" style="left:270.82px;top:259.49px;font-size:13.63px;line-height:13.63px;color:#666666;">7</div>
<div class="a mo" style="left:310.00px;top:280.38px;font-size:13.63px;line-height:13.63px;color:#222;"><span class="kw">BEGIN</span></div>
<div class="a mo" style="left:270.82px;top:279.78px;font-size:13.63px;line-height:13.63px;color:#666666;">8</div>
<div class="a mo" style="left:310.00px;top:300.67px;font-size:13.63px;line-height:13.63px;color:#222;"><span class="kw">SELECT INTO</span></div>
<div class="a mo" style="left:270.82px;top:300.07px;font-size:13.63px;line-height:13.63px;color:#666666;">9</div>
<div class="a mo" style="left:310.00px;top:320.96px;font-size:13.63px;line-height:13.63px;color:#222;">v_ename, v_hiredate, v_sal, v_comm, v_dname</div>
<div class="a mo" style="left:262.64px;top:320.36px;font-size:13.63px;line-height:13.63px;color:#666666;">10</div>
<div class="a mo" style="left:310.00px;top:341.25px;font-size:13.63px;line-height:13.63px;color:#222;">ename, hiredate, sal, <span class="kw">COALESCE</span><span class="br">(</span>comm, <span class="nm">0</span><span class="br">)</span>, dname</div>
<div class="a mo" style="left:262.64px;top:340.65px;font-size:13.63px;line-height:13.63px;color:#666666;">11</div>
<div class="a mo" style="left:310.00px;top:361.54px;font-size:13.63px;line-height:13.63px;color:#222;"><span class="kw">FROM</span> emp e, dept d</div>
<div class="a mo" style="left:262.64px;top:360.94px;font-size:13.63px;line-height:13.63px;color:#666666;">12</div>
<div class="a mo" style="left:310.00px;top:381.83px;font-size:13.63px;line-height:13.63px;color:#222;"><span class="kw">WHERE</span> empno = p_empno;</div>
<div class="a mo" style="left:262.64px;top:381.23px;font-size:13.63px;line-height:13.63px;color:#666666;">13</div>
<div class="a mo" style="left:310.00px;top:402.12px;font-size:13.63px;line-height:13.63px;color:#222;"><span class="kw">END</span>;</div>
<div class="a mo" style="left:262.64px;top:401.52px;font-size:13.63px;line-height:13.63px;color:#666666;">14</div>
<svg class="a" style="left:282px;top:282px" width="9" height="8" viewBox="0 0 9 8"><path d="M0.3 0.3H8.1L4.2 7.2Z" fill="#8c8c8c"/></svg>
<div class="a" style="left:254px;top:442px;width:824px;height:1px;background:#dde0e6;"></div>
<div class="a tx" style="left:262.50px;top:452.10px;font-size:13.5px;line-height:13.5px;font-weight:normal;color:#326690;letter-spacing:0px;">Parameters</div>
<div class="a tx" style="left:351.80px;top:452.10px;font-size:13.5px;line-height:13.5px;font-weight:normal;color:#222;letter-spacing:0px;">Local variables</div>
<div class="a tx" style="left:461.80px;top:452.10px;font-size:13.5px;line-height:13.5px;font-weight:normal;color:#222;letter-spacing:0px;">Messages</div>
<div class="a tx" style="left:543.30px;top:452.10px;font-size:13.5px;line-height:13.5px;font-weight:normal;color:#222;letter-spacing:0px;">Results</div>
<div class="a tx" style="left:607.00px;top:452.10px;font-size:13.5px;line-height:13.5px;font-weight:normal;color:#222;letter-spacing:0px;">Stack</div>
<div class="a" style="left:254px;top:470px;width:89px;height:3px;background:#326690;"></div>
<div class="a" style="left:254px;top:473px;width:824px;height:1px;background:#e6e8ed;"></div>
<div class="a" style="left:254px;top:502px;width:824px;height:1px;background:#e6e8ed;"></div>
<div class="a" style="left:254px;top:503px;width:588px;height:28px;background:#f2f4f7;"></div>
<div class="a" style="left:254px;top:531px;width:824px;height:1px;background:#e6e8ed;"></div>
<div class="a" style="left:582px;top:474px;width:1px;height:57px;background:#e6e8ed;"></div>
<div class="a" style="left:841px;top:474px;width:1px;height:57px;background:#e6e8ed;"></div>
<div class="a tx" style="left:258.20px;top:482.30px;font-size:13.3px;line-height:13.3px;font-weight:bold;color:#222;letter-spacing:0px;-webkit-text-stroke-width:0;">Name</div>
<div class="a tx" style="left:587.70px;top:482.30px;font-size:13.3px;line-height:13.3px;font-weight:bold;color:#222;letter-spacing:0px;-webkit-text-stroke-width:0;">Type</div>
<div class="a tx" style="left:846.70px;top:482.30px;font-size:13.3px;line-height:13.3px;font-weight:bold;color:#222;letter-spacing:0px;-webkit-text-stroke-width:0;">Value</div>
<div class="a tx" style="left:258.20px;top:511.10px;font-size:13.3px;line-height:13.3px;font-weight:normal;color:#222;letter-spacing:0px;">p_empno</div>
<div class="a tx" style="left:587.70px;top:511.10px;font-size:13.3px;line-height:13.3px;font-weight:normal;color:#222;letter-spacing:0px;">integer</div>
<div class="a tx" style="left:846.70px;top:511.10px;font-size:13.3px;line-height:13.3px;font-weight:normal;color:#222;letter-spacing:0px;">7900</div>
</body></html>
